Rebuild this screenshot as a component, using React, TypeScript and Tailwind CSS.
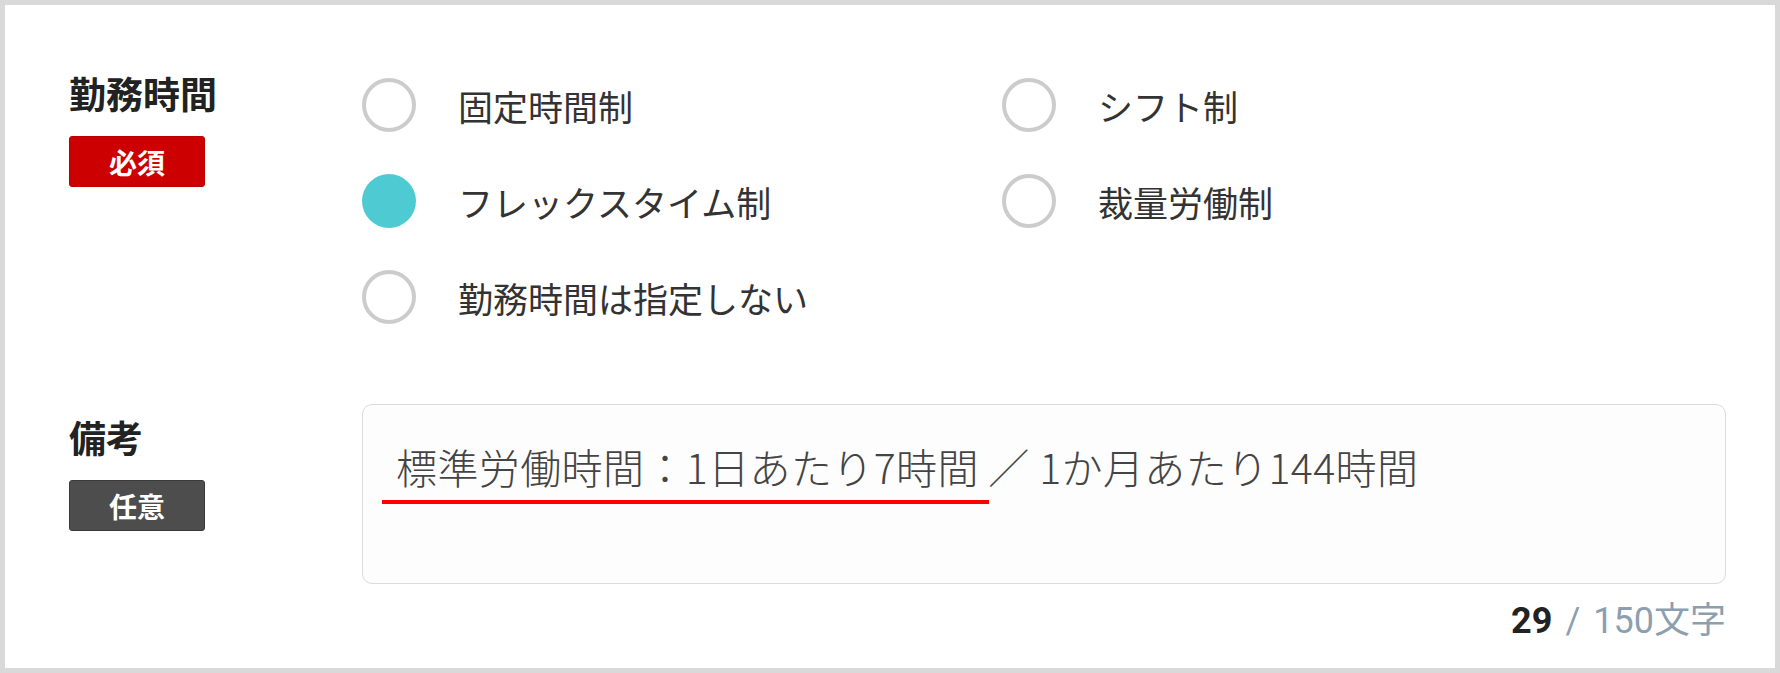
const JP = "font-['Noto_Sans_CJK_JP','Noto_Sans',sans-serif]";

type Option = { label: string; checked?: boolean };

const OPTIONS: Option[] = [
  { label: "固定時間制" },
  { label: "シフト制" },
  { label: "フレックスタイム制", checked: true },
  { label: "裁量労働制" },
  { label: "勤務時間は指定しない" },
];

function Badge({ tone, children }: { tone: "required" | "optional"; children: string }) {
  const cls =
    tone === "required"
      ? "bg-[#cc0000] border-[#b80000]"
      : "bg-[#4d4d4d] border-[#3a3a3a]";
  return (
    <div
      className={`flex h-[51px] w-[136px] items-center justify-center rounded-[3px] border text-[28px] font-bold leading-none text-white ${cls}`}
    >
      {children}
    </div>
  );
}

function FieldLabel({ title, tone, badge }: { title: string; tone: "required" | "optional"; badge: string }) {
  return (
    <div className="w-[293px] shrink-0">
      <div className="text-[37px] font-bold leading-[42px] text-[#222]">{title}</div>
      <div className="mt-[22px]">
        <Badge tone={tone}>{badge}</Badge>
      </div>
    </div>
  );
}

function Radio({ label, checked }: Option) {
  return (
    <div className="flex h-[96px] items-center">
      {checked ? (
        <span className="h-[54px] w-[54px] shrink-0 rounded-full bg-[#4ecad3]" />
      ) : (
        <span className="h-[54px] w-[54px] shrink-0 rounded-full border-[4px] border-[#cccccc] bg-white" />
      )}
      <span className="ml-[42px] text-[35px] leading-none text-[#333]">{label}</span>
    </div>
  );
}

export default function App() {
  return (
    <div
      className={`${JP} box-border h-[673px] w-[1780px] border-[5px] border-[#d9d9d9] bg-white pl-[64px] pr-[49px] pt-[52px]`}
    >
      <div className="flex">
        <div className="pt-[15px]">
          <FieldLabel title="勤務時間" tone="required" badge="必須" />
        </div>
        <div className="grid grid-cols-[640px_1fr]">
          {OPTIONS.map((o) => (
            <Radio key={o.label} {...o} />
          ))}
        </div>
      </div>

      <div className="mt-[59px] flex">
        <div className="pt-[12px]">
          <FieldLabel title="備考" tone="optional" badge="任意" />
        </div>
        <div className="flex-1">
          <div className="relative h-[180px] rounded-[10px] border-[1.5px] border-[#dcdcdc] bg-[#fdfdfd] pl-[33px] pt-[31px]">
            <div className="whitespace-pre text-[41px] font-light leading-[60px] tracking-[0.4px] text-[#444]">
              標準労働時間：1日あたり7時間 ／ 1か月あたり144時間
            </div>
            <span className="absolute left-[19px] top-[95px] h-[4px] w-[607px] bg-[#ff0000]" />
          </div>
          <div className="mt-[12px] flex items-baseline justify-end font-['Roboto',sans-serif] text-[36px] leading-[42px]">
            <span className="font-bold text-[#222]">29</span>
            <span className="mx-[13px] text-[#8c9fb0]">/</span>
            <span className="text-[#8c9fb0]">
              150<span className={JP}>文字</span>
            </span>
          </div>
        </div>
      </div>
    </div>
  );
}
